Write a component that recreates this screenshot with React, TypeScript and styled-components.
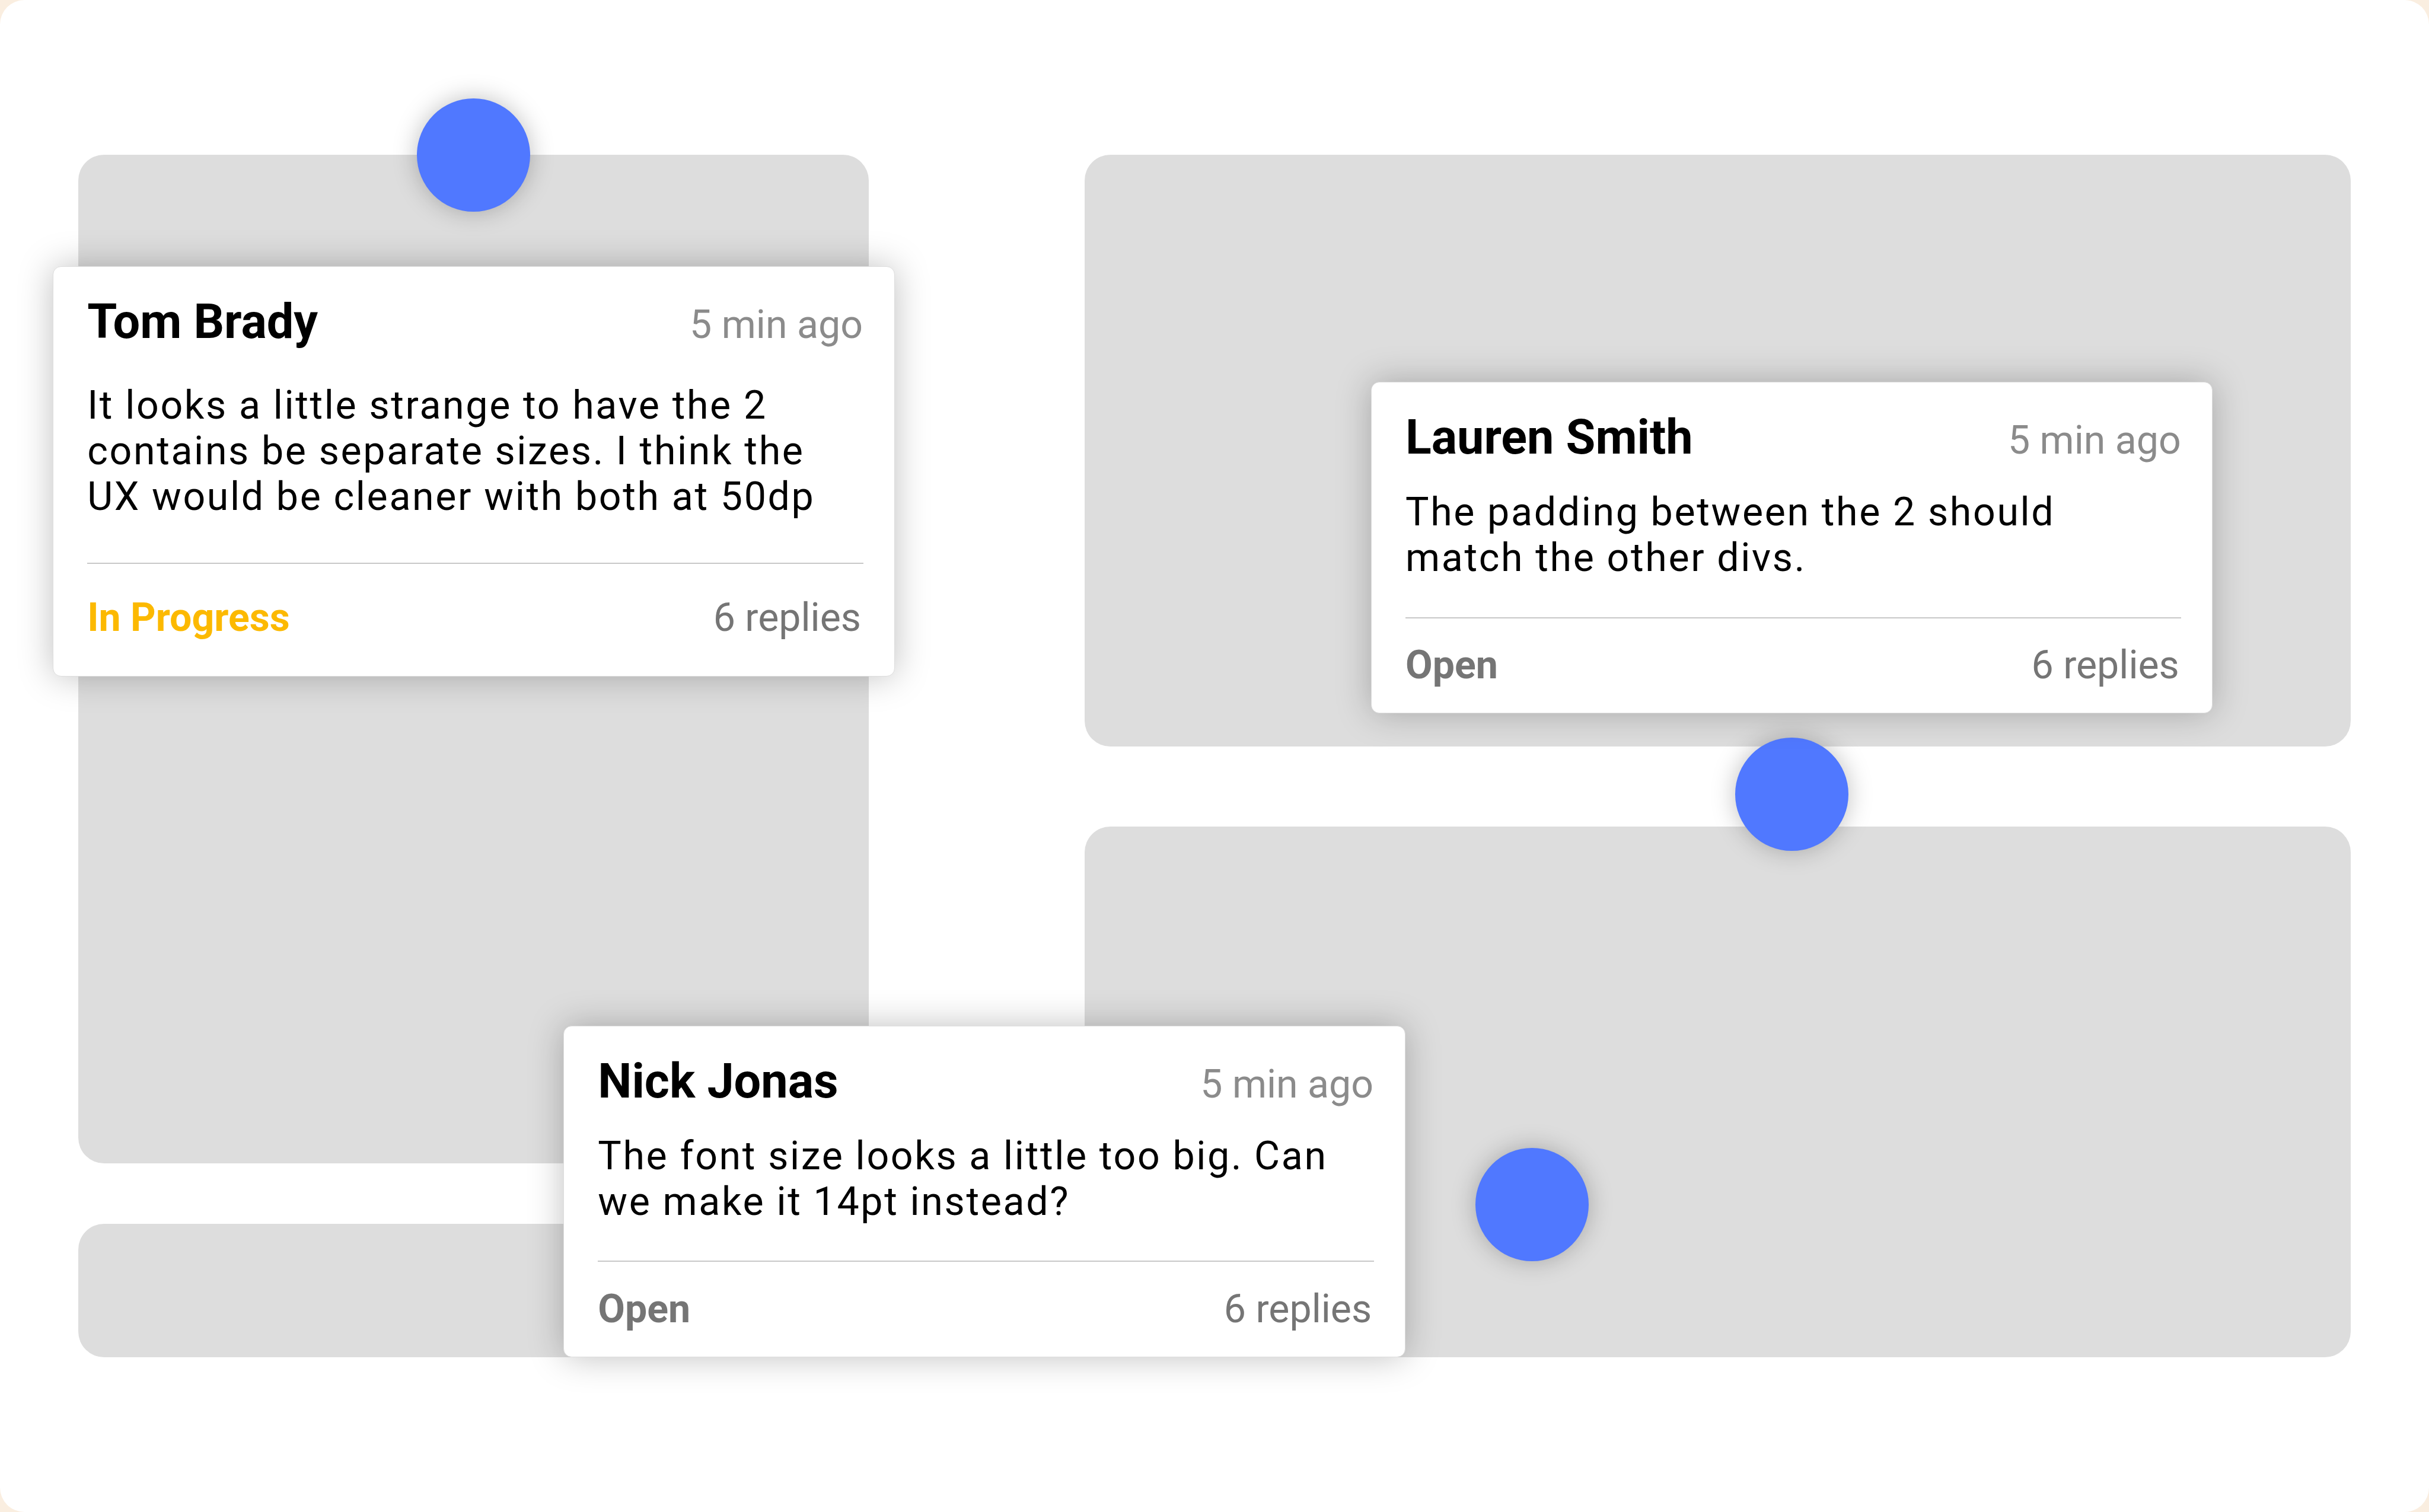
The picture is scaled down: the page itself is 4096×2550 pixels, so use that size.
import React from "react"
import styled, { createGlobalStyle } from "styled-components"

interface IComment {
  author: string
  time: string
  lines: string[]
  status: string
  statusColor: string
  replies: string
  left: number
  top: number
  roomy?: boolean
}

const theme = {
  colors: {
    backdrop: "#faeee0",
    panel: "#dddddd",
    divider: "#c8c8c8",
    pin: "#5078ff",
    grey: "#757575",
    lightGrey: "#8b8b8b",
    yellow: "#fcb900"
  }
}

const pins = [
  { left: 95.5, top: 22.5 },
  { left: 397.5, top: 169 },
  { left: 338, top: 263 }
]

const comments: IComment[] = [
  {
    author: "Tom Brady",
    time: "5 min ago",
    lines: [
      "It looks a little strange to have the 2",
      "contains be separate sizes. I think the",
      "UX would be cleaner with both at 50dp"
    ],
    status: "In Progress",
    statusColor: theme.colors.yellow,
    replies: "6 replies",
    left: 12.06,
    top: 61,
    roomy: true
  },
  {
    author: "Lauren Smith",
    time: "5 min ago",
    lines: ["The padding between the 2 should", "match the other divs."],
    status: "Open",
    statusColor: theme.colors.grey,
    replies: "6 replies",
    left: 314.06,
    top: 87.5
  },
  {
    author: "Nick Jonas",
    time: "5 min ago",
    lines: ["The font size looks a little too big. Can", "we make it 14pt instead?"],
    status: "Open",
    statusColor: theme.colors.grey,
    replies: "6 replies",
    left: 129.06,
    top: 235
  }
]

const Comment: React.FC<{ comment: IComment }> = ({ comment }) => (
  <Card left={comment.left} top={comment.top} $roomy={comment.roomy}>
    <Header>
      <Author>{comment.author}</Author>
      <Time>{comment.time}</Time>
    </Header>
    <Message $roomy={comment.roomy}>
      {comment.lines.map(line => (
        <Line key={line}>{line}</Line>
      ))}
    </Message>
    <Footer $roomy={comment.roomy}>
      <Status color={comment.statusColor}>{comment.status}</Status>
      <Replies>{comment.replies}</Replies>
    </Footer>
  </Card>
)

const App: React.FC = () => (
  <>
    <GlobalStyle />
    <Board>
      <Column $width={181}>
        <Panel $height={231} />
        <Panel $height={30.5} />
      </Column>
      <Column $width={290}>
        <Panel $height={135.5} />
        <Panel $height={121.5} />
      </Column>
      {pins.map(pin => (
        <Pin key={pin.left} left={pin.left} top={pin.top} />
      ))}
      {comments.map(comment => (
        <Comment key={comment.author} comment={comment} />
      ))}
    </Board>
  </>
)

// the board is 556.5rem wide and always fills the window
const GlobalStyle = createGlobalStyle`
  html {
    font-size: calc(100vw / 556.5);
  }
  body {
    margin: 0;
    overflow: hidden;
    background-color: ${theme.colors.backdrop};
    font-family: Roboto, "Liberation Sans", sans-serif;
  }
`

const Board = styled.div`
  position: relative;
  display: flex;
  justify-content: space-between;
  box-sizing: border-box;
  width: 100vw;
  height: 100vh;
  padding: 35.5rem 18rem;
  border-radius: 5.6rem;
  background-color: white;
  overflow: hidden;
`

const Column = styled.div<{ $width: number }>`
  display: flex;
  flex-direction: column;
  justify-content: space-between;
  width: ${props => props.$width}rem;
`

const Panel = styled.div<{ $height: number }>`
  height: ${props => props.$height}rem;
  border-radius: 5.9rem;
  background-color: ${theme.colors.panel};
`

const Floating = styled.div<{ left: number; top: number }>`
  position: absolute;
  left: ${props => props.left}rem;
  top: ${props => props.top}rem;
`

const Pin = styled(Floating)`
  width: 26rem;
  height: 26rem;
  border-radius: 50%;
  background-color: ${theme.colors.pin};
  box-shadow: 0 0 5.5rem rgba(0, 0, 0, 0.25);
`

const Card = styled(Floating)<{ $roomy?: boolean }>`
  box-sizing: border-box;
  width: 192.9rem;
  height: ${props => (props.$roomy ? 94 : 76)}rem;
  padding: 7.4rem 7.05rem 0 7.8rem;
  border: 0.25rem solid ${theme.colors.panel};
  border-radius: 1.9rem;
  background-color: white;
  box-shadow: 0 0 8rem rgba(0, 0, 0, 0.25);
`

const Header = styled.div`
  display: flex;
  justify-content: space-between;
  align-items: baseline;
  line-height: 10.5rem;
`

const Author = styled.div`
  font-size: 11rem;
  font-weight: 700;
  color: black;
`

const Time = styled.div`
  padding-right: 0.1rem;
  font-size: 9rem;
  color: ${theme.colors.lightGrey};
`

const Message = styled.div<{ $roomy?: boolean }>`
  padding: ${props => (props.$roomy ? "7.9rem 0 9.8rem" : "5.9rem 0 8.3rem")};
`

const Line = styled.div`
  height: 10.5rem;
  line-height: 10.5rem;
  font-size: 9rem;
  letter-spacing: 0.36rem;
  white-space: nowrap;
  color: black;
`

const Footer = styled.div<{ $roomy?: boolean }>`
  display: flex;
  justify-content: space-between;
  padding-top: ${props => (props.$roomy ? 7.15 : 5.5)}rem;
  border-top: 0.28rem solid ${theme.colors.divider};
  font-size: 9rem;
  line-height: 10.5rem;
`

const Status = styled.div<{ color: string }>`
  font-weight: 700;
  color: ${props => props.color};
`

const Replies = styled.div`
  padding-right: 0.5rem;
  color: ${theme.colors.grey};
`

export default App
